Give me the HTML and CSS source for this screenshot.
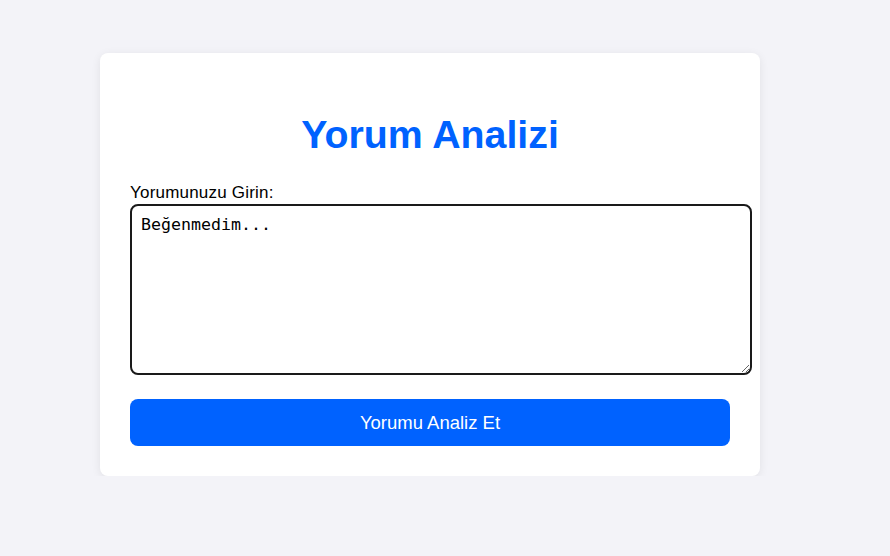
FILE: index.html
```html
<!DOCTYPE html>
<html lang="tr">
<head>
<meta charset="utf-8">
<title>Yorum Analizi</title>
<link rel="stylesheet" href="styles.css">
</head>
<body>
<main class="card">
  <h1 class="title">Yorum Analizi</h1>
  <label class="label" for="yorum">Yorumunuzu Girin:</label>
  <textarea id="yorum" class="input">Beğenmedim...</textarea>
  <button class="btn" type="button">Yorumu Analiz Et</button>
</main>
</body>
</html>
```
FILE: styles.css
```css
html, body {
  margin: 0;
  padding: 0;
}
body {
  background: #f3f3f8;
  font-family: "Liberation Sans", Arial, sans-serif;
  padding-top: 53px;
  padding-left: 100px;
}
.card {
  width: 660px;
  box-sizing: border-box;
  background: #ffffff;
  border-radius: 8px;
  box-shadow: 0 2px 10px rgba(0, 0, 0, 0.08);
  padding: 30px;
  display: flex;
  flex-direction: column;
  align-items: flex-start;
}
.title {
  align-self: stretch;
  text-align: center;
  color: #0062ff;
  font-size: 39.3px;
  font-weight: bold;
  margin: 29px 0 28px;
  line-height: 44px;
}
.label {
  font-size: 17px;
  letter-spacing: 0.2px;
  line-height: 18px;
  color: #000;
  margin-bottom: 2px;
}
.input {
  width: 622px;
  height: 171px;
  box-sizing: border-box;
  border: 2px solid #1a1a1a;
  border-radius: 8px;
  padding: 9px;
  font-family: "DejaVu Sans Mono", monospace;
  font-size: 16.6px;
  color: #000;
  resize: vertical;
  margin: 0 0 24px;
}
.btn {
  width: 600px;
  height: 47px;
  border: none;
  border-radius: 8px;
  background: #0062ff;
  color: #ffffff;
  font-family: "Liberation Sans", Arial, sans-serif;
  font-size: 18.5px;
  cursor: pointer;
}
```
